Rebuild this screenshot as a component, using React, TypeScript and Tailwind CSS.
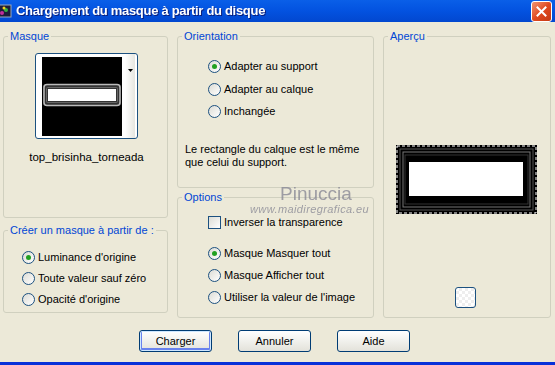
import type { ReactNode } from 'react'

function Radio({ checked, label }: { checked?: boolean; label: string }) {
    return (
        <div className="flex items-center gap-[3px] h-[13px]">
            <span className="relative w-[13px] h-[13px] rounded-full border border-[#1c5180] bg-gradient-to-br from-[#dcdcd5] to-white flex items-center justify-center shrink-0">
                {checked && <span className="w-[5px] h-[5px] rounded-full bg-[#21a121]" />}
            </span>
            <span>{label}</span>
        </div>
    )
}

function Group({ label, className, children }: { label: string; className?: string; children: ReactNode }) {
    return (
        <fieldset className={`border border-[#d0d0bf] rounded-[3px] px-0 pb-0 pt-0 m-0 min-w-0 ${className ?? ''}`}>
            <legend className="ml-[4px] px-[2px] text-[#0046d5] leading-[13px]">{label}</legend>
            {children}
        </fieldset>
    )
}

function Button({ label, primary }: { label: string; primary?: boolean }) {
    return (
        <button
            className={`w-[73px] h-[22px] rounded-[3px] border border-[#003c74] bg-gradient-to-b from-white to-[#e3e2da] text-black leading-none ${
                primary ? 'shadow-[inset_0_0_0_1px_#cee7ff,inset_0_-1px_0_2px_#6982ee]' : ''
            }`}
        >
            {label}
        </button>
    )
}

export default function App() {
    return (
        <div className="w-[555px] h-[365px] bg-[#ece9d8] flex flex-col overflow-hidden text-[11px] text-black font-['Liberation_Sans',Arial,sans-serif]">
            {/* title bar */}
            <div className="h-[22px] shrink-0 flex items-center bg-gradient-to-b from-[#0a5fe8] via-[#0352e0] to-[#0247cf]">
                <svg width="14" height="14" viewBox="0 0 14 14" className="-ml-[2px] mr-[4px]">
                    <rect x="0" y="1" width="13" height="12" fill="#1c1c3a" stroke="#9ab" strokeWidth="1" />
                    <circle cx="4" cy="9" r="2" fill="#c0309a" />
                    <circle cx="8" cy="6" r="2" fill="#30b040" />
                    <circle cx="6" cy="4" r="1.5" fill="#f0d020" />
                </svg>
                <span className="text-white font-bold text-[13px] tracking-[-0.3px] drop-shadow-[1px_1px_0_#0a1e7a]">
                    Chargement du masque à partir du disque
                </span>
                <div className="ml-auto mr-[3px] w-[21px] h-[21px] rounded-[3px] border border-white bg-gradient-to-br from-[#f0936f] via-[#e0491f] to-[#c43a14] flex items-center justify-center">
                    <svg width="11" height="11" viewBox="0 0 11 11">
                        <path d="M1.5 1.5 L9.5 9.5 M9.5 1.5 L1.5 9.5" stroke="white" strokeWidth="2" strokeLinecap="square" />
                    </svg>
                </div>
            </div>

            {/* body */}
            <div className="flex-1 relative flex flex-col pt-[8px]">
                <div className="flex pl-[3px] gap-[9px]">
                    {/* left column */}
                    <div className="w-[165px] flex flex-col gap-[6px]">
                        <Group label="Masque" className="h-[188px]">
                            <div className="flex flex-col items-center pt-[10px] pl-[2px]">
                                <div className="w-[103px] h-[86px] rounded-[3px] border border-[#1c5180] bg-white flex items-center pl-[6px] pr-[2px] gap-[3px]">
                                    <svg width="80" height="79" viewBox="0 0 80 79" className="shrink-0">
                                        <rect width="80" height="79" fill="#000" />
                                        <rect x="1" y="27" width="78" height="22" rx="3" fill="#333" />
                                        <rect x="2" y="27.5" width="76" height="21" rx="3" fill="none" stroke="#bbb" strokeWidth="1.5" />
                                        <rect x="4.5" y="30.5" width="71" height="15" rx="1" fill="none" stroke="#666" strokeWidth="1" />
                                        <rect x="6" y="32" width="68" height="12" fill="#fff" />
                                    </svg>
                                    <div className="flex-1 h-full bg-gradient-to-r from-white to-[#e6e6e0] flex items-start justify-center pt-[15px]">
                                        <svg width="5" height="3" viewBox="0 0 5 3">
                                            <path d="M0 0 H5 L2.5 3 Z" fill="#000" />
                                        </svg>
                                    </div>
                                </div>
                                <div className="mt-[10px] text-[11.5px]">top_brisinha_torneada</div>
                            </div>
                        </Group>
                        <Group label="Créer un masque à partir de :" className="h-[89px]">
                            <div className="flex flex-col gap-[8px] pl-[18px] pt-[14px]">
                                <Radio checked label="Luminance d'origine" />
                                <Radio label="Toute valeur sauf zéro" />
                                <Radio label="Opacité d'origine" />
                            </div>
                        </Group>
                    </div>

                    {/* middle column */}
                    <div className="w-[197px] flex flex-col gap-[3px]">
                        <Group label="Orientation" className="h-[158px]">
                            <div className="flex flex-col gap-[9.5px] pl-[30px] pt-[17px]">
                                <Radio checked label="Adapter au support" />
                                <Radio label="Adapter au calque" />
                                <Radio label="Inchangée" />
                            </div>
                            <p className="pl-[7px] pt-[25px] leading-[13px]">
                                Le rectangle du calque est le même
                                <br />
                                que celui du support.
                            </p>
                        </Group>
                        <Group label="Options" className="h-[127px]">
                            <div className="flex flex-col pl-[30px] pt-[12px]">
                                <div className="flex items-center gap-[3px] h-[13px]">
                                    <span className="w-[13px] h-[13px] border border-[#1c5180] bg-gradient-to-br from-[#dcdcd5] to-white shrink-0" />
                                    <span>Inverser la transparence</span>
                                </div>
                                <div className="flex flex-col gap-[9px] mt-[18px]">
                                    <Radio checked label="Masque Masquer tout" />
                                    <Radio label="Masque Afficher tout" />
                                    <Radio label="Utiliser la valeur de l'image" />
                                </div>
                            </div>
                        </Group>
                    </div>

                    {/* right column */}
                    <Group label="Aperçu" className="w-[168px] h-[288px]">
                        <div className="flex flex-col items-center h-full">
                            <svg width="141" height="69" viewBox="0 0 141 69" className="mt-[102px] ml-[12px] self-start">
                                <rect x="0" y="0" width="141" height="69" fill="#000" />
                                <rect x="1" y="1" width="139" height="67" fill="none" stroke="#fff" strokeWidth="1" strokeDasharray="3 2" />
                                <rect x="4" y="4" width="133" height="61" fill="none" stroke="#555" strokeWidth="1" />
                                <rect x="7" y="7" width="127" height="55" fill="none" stroke="#777" strokeWidth="1" />
                                <rect x="9" y="10" width="123" height="49" fill="none" stroke="#333" strokeWidth="1" />
                                <rect x="13" y="17" width="114" height="34" fill="#fff" />
                            </svg>
                            <div className="mt-auto mb-[9px] mr-[3px] w-[21px] h-[21px] rounded-[3px] border border-[#1c5180] bg-[linear-gradient(45deg,#eee_25%,transparent_25%,transparent_75%,#eee_75%),linear-gradient(45deg,#eee_25%,#fff_25%,#fff_75%,#eee_75%)] bg-[length:6px_6px] bg-[position:0_0,3px_3px]" />
                        </div>
                    </Group>
                </div>

                {/* buttons */}
                <div className="flex justify-center gap-[26px] mt-[12px] pr-[6px]">
                    <Button primary label="Charger" />
                    <Button label="Annuler" />
                    <Button label="Aide" />
                </div>

                {/* watermark */}
                <span className="absolute left-[280px] top-[163px] text-[19px] leading-[18px] text-[#8a8a96] opacity-80 pointer-events-none">
                    Pinuccia
                </span>
                <span className="absolute left-[250px] top-[182px] text-[11px] leading-[11px] italic tracking-[0.4px] text-[#8a8a96] opacity-80 pointer-events-none">
                    www.maidiregrafica.eu
                </span>

                <div className="absolute bottom-0 left-0 right-0 h-[3px] bg-[#0831d9]" />
            </div>
        </div>
    )
}
